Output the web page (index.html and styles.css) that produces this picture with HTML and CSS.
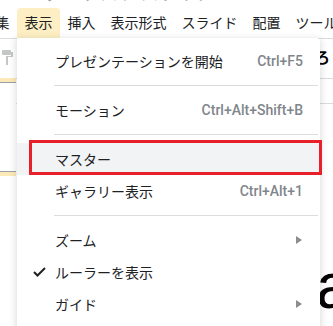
FILE: index.html
```html
<!DOCTYPE html>
<html lang="ja">
<head>
  <meta charset="UTF-8">
  <meta name="viewport" content="width=device-width, initial-scale=1.0">
  <title>表示メニュー</title>
  <link rel="stylesheet" href="styles.css">
</head>
<body>
  <div class="app">
    <div class="title"><span>ユーザー テスト スライド ー ー</span></div>

    <nav class="menubar">
      <span class="menu-item">編集</span>
      <span class="menu-item active">表示</span>
      <span class="menu-item">挿入</span>
      <span class="menu-item">表示形式</span>
      <span class="menu-item">スライド</span>
      <span class="menu-item">配置</span>
      <span class="menu-item">ツール</span>
    </nav>

    <div class="toolbar">
      <svg class="paint-icon" width="11" height="15" viewBox="0 0 11 15">
        <rect x="0" y="0" width="9" height="5" rx="1" fill="#c4c7c5"/>
        <path d="M9 2h2v5H6v8H4V6h5z" fill="#c4c7c5"/>
      </svg>
      <span class="font-glyph">ろ</span>
    </div>

    <div class="main">
      <div class="filmstrip">
        <div class="thumb-bottom"></div>
        <div class="thumb-top"></div>
      </div>
      <div class="canvas">
        <div class="ruler">
          <span class="tick"></span>
          <span class="ruler-num">3</span>
        </div>
        <div class="slide">
          <span class="slide-text">a</span>
        </div>
      </div>
    </div>

    <!-- 表示 dropdown -->
    <div class="dropdown">
      <div class="item">
        <span class="check"></span>
        <span class="label">プレゼンテーションを開始</span>
        <span class="shortcut">Ctrl+F5</span>
      </div>
      <div class="separator"></div>
      <div class="item">
        <span class="check"></span>
        <span class="label">モーション</span>
        <span class="shortcut">Ctrl+Alt+Shift+B</span>
      </div>
      <div class="separator"></div>
      <div class="item hover">
        <span class="check"></span>
        <span class="label">マスター</span>
      </div>
      <div class="item">
        <span class="check"></span>
        <span class="label">ギャラリー表示</span>
        <span class="shortcut">Ctrl+Alt+1</span>
      </div>
      <div class="separator"></div>
      <div class="item">
        <span class="check"></span>
        <span class="label">ズーム</span>
        <svg class="arrow" width="6" height="8" viewBox="0 0 6 8"><path d="M0 0l6 4-6 4z" fill="#8a8e92"/></svg>
      </div>
      <div class="item">
        <span class="check">
          <svg width="13" height="10" viewBox="0 0 13 10"><path d="M1 5l3.5 3.5L12 1" fill="none" stroke="#202124" stroke-width="2"/></svg>
        </span>
        <span class="label">ルーラーを表示</span>
      </div>
      <div class="item">
        <span class="check"></span>
        <span class="label">ガイド</span>
        <svg class="arrow" width="6" height="8" viewBox="0 0 6 8"><path d="M0 0l6 4-6 4z" fill="#8a8e92"/></svg>
      </div>
    </div>

    <!-- annotation -->
    <div class="callout"></div>
  </div>
</body>
</html>
```

FILE: styles.css
```css
body {
  margin: 0;
  overflow: hidden;
  background-color: #fff;
  font-family: Roboto, "Noto Sans CJK JP", sans-serif;
  color: #202124;
}

.app {
  position: relative;
  width: 333px;
  height: 326px;
  overflow: hidden;
}

/* only the bottom of the doc title peeks in */
.title {
  height: 4px;
  overflow: hidden;
  padding-left: 6px;
  white-space: nowrap;
}

.title span {
  display: block;
  margin-top: -15px;
  font-size: 18px;
  line-height: 18px;
  color: #9aa0a6;
}

.menubar {
  display: flex;
  height: 30px;
  margin-left: -26px;
  margin-top: 4px;
  white-space: nowrap;
}

.menu-item {
  padding: 0 7.5px;
  font-size: 14px;
  line-height: 30px;
  border-radius: 4px 4px 0 0;
}

.menu-item.active {
  background-color: #fdefc3;
}

.toolbar {
  display: flex;
  justify-content: space-between;
  align-items: flex-start;
  height: 40px;
  border-top: 1px solid #dadce0;
  box-sizing: border-box;
  padding: 11px 3px 0 2px;
}

.paint-icon {
  display: block;
}

.font-glyph {
  font-size: 15px;
  font-weight: bold;
  line-height: 14px;
  margin-top: 1px;
  color: #000;
}

.main {
  display: flex;
  height: 248px;
}

.filmstrip {
  width: 16px;
  flex-shrink: 0;
}

.thumb-bottom {
  height: 4px;
  background-color: #fbe9b7;
  border-bottom: 1px solid #9aa0a6;
}

.thumb-top {
  margin-top: 88px;
  height: 4px;
  background-color: #fbe9b7;
  border-top: 1px solid #9aa0a6;
}

.canvas {
  flex: 1;
  background-color: #fff;
}

.ruler {
  display: flex;
  justify-content: flex-end;
  align-items: center;
  height: 24px;
  border-top: 1px solid #dadce0;
  border-bottom: 1px solid #dadce0;
}

.tick {
  width: 1px;
  height: 4px;
  background-color: #9aa0a6;
  margin-right: 4px;
}

.ruler-num {
  font-size: 11px;
  color: #3c4043;
  width: 5px;
  overflow: hidden;
  margin-bottom: 6px;
}

.slide {
  padding: 150px 0 0 300px;
}

.slide-text {
  font-family: "Liberation Sans", Arial, sans-serif;
  font-size: 64px;
  line-height: 64px;
  color: #000;
}

.dropdown {
  position: absolute;
  left: 17px;
  top: 38px;
  width: 303px;
  height: 300px;
  padding-top: 7px;
  box-sizing: border-box;
  background-color: #fff;
  border-radius: 0 4px 0 0;
  box-shadow: 0 2px 6px 2px rgba(60, 64, 67, 0.15);
}

.item {
  display: flex;
  align-items: center;
  height: 32px;
  padding: 0 17px 0 16px;
  font-size: 14px;
}

.item.hover {
  background-color: #f1f3f4;
}

.check {
  width: 22px;
  flex-shrink: 0;
  display: flex;
  align-items: center;
}

.label {
  flex: 1;
  white-space: nowrap;
}

.shortcut {
  color: #80868b;
  font-weight: 500;
  white-space: nowrap;
}

.arrow {
  display: block;
  margin-right: 1px;
}

.separator {
  height: 1px;
  margin: 8px 2px 8px 37px;
  background-color: #dadce0;
}

.callout {
  position: absolute;
  left: 29px;
  top: 140px;
  width: 287px;
  height: 29px;
  border: 3px solid #e8202a;
}
```
